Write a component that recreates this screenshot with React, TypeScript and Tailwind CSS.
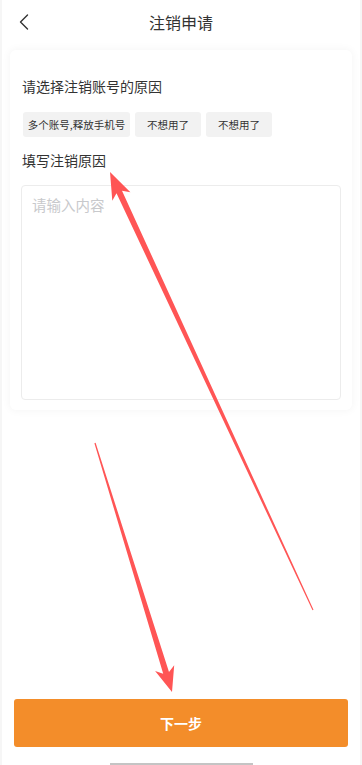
import { ChevronLeft } from "lucide-react"

const reasons = [
    { label: "多个账号,释放手机号", width: "w-[107px]" },
    { label: "不想用了", width: "w-[66px]" },
    { label: "不想用了", width: "w-[66px]" },
]

export default function App() {
    return (
        <div
            className="relative flex h-[765px] w-full flex-col overflow-hidden border-x-2 border-[#f6f6f6] bg-white text-[#333]"
            style={{ fontFamily: '"Noto Sans CJK SC", "Noto Sans", sans-serif' }}
        >
            {/* header */}
            <div className="relative flex h-[44px] items-center justify-center">
                <button className="absolute left-[8px] top-[8px] text-[#333]">
                    <ChevronLeft size={28} strokeWidth={1.2} />
                </button>
                <span className="text-[16px] leading-none">注销申请</span>
            </div>

            {/* form card */}
            <div className="mx-[8px] mt-[6px] rounded-[6px] bg-white pb-[10px] pt-[26px] shadow-[0_0_10px_rgba(0,0,0,0.05)]">
                <div className="pl-[12px] text-[14px] leading-[20px]">请选择注销账号的原因</div>
                <div className="mt-[16px] flex gap-[5px] pl-[13px]">
                    {reasons.map((r, i) => (
                        <div
                            key={i}
                            className={`flex h-[25px] items-center justify-center rounded-[3px] bg-[#f2f2f2] text-[10.5px] text-[#333] ${r.width}`}
                        >
                            {r.label}
                        </div>
                    ))}
                </div>
                <div className="mt-[13px] pl-[12px] text-[14px] leading-[20px]">填写注销原因</div>
                <textarea
                    className="ml-[11px] mt-[15px] block h-[215px] w-[320px] resize-none rounded-[4px] border border-[#ececec] px-[10px] py-[8px] text-[14.5px] outline-none placeholder:text-[#c8c9cc]"
                    placeholder="请输入内容"
                />
            </div>

            {/* bottom */}
            <button className="mx-[12px] mt-auto flex h-[48px] items-center justify-center rounded-[3px] bg-[#f38d2a] text-[14px] font-semibold text-white">
                下一步
            </button>
            <div className="mt-[16px] h-[2px] w-[143px] self-center bg-[#c4c4c4]" />

            {/* annotation arrows */}
            <svg className="pointer-events-none absolute left-[-2px] top-0" width="362" height="765">
                <polygon
                    fill="#ff5555"
                    points="110,172 130.4,192.3 122,190.7 313.5,609.8 312.5,610.2 116.5,193.2 112.3,200.7"
                />
                <polygon
                    fill="#ff5555"
                    points="172,692 155.1,671.1 163.2,673.8 94.4,443.2 95.6,442.8 169,672 174.2,665.2"
                />
            </svg>
        </div>
    )
}
